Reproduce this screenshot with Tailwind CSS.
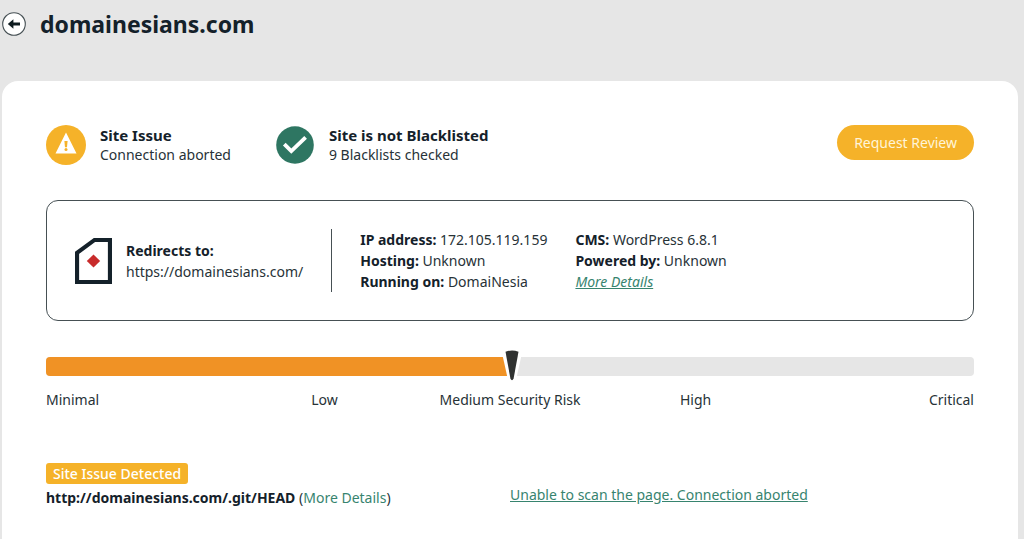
<!DOCTYPE html>
<html lang="en">
<head>
  <meta charset="UTF-8" />
  <meta name="viewport" content="width=device-width, initial-scale=1" />
  <title>domainesians.com - Site Check</title>
  <script src="https://cdn.jsdelivr.net/npm/@tailwindcss/browser@4"></script>
</head>
<body class="bg-[#e6e6e6] min-h-screen flex flex-col pl-0.5 pr-1.5 font-['Noto_Sans',sans-serif] text-sm text-[#273237]">
  <header class="flex items-center gap-3.5 h-12 mb-[33px]">
    <button type="button" aria-label="Back" class="size-6 cursor-pointer">
      <svg class="size-6" viewBox="0 0 24 24">
        <circle cx="12" cy="12" r="11.3" fill="#fff" stroke="#465054" stroke-width="1.1" />
        <path d="M5.8 12l5.6-4.8v3.2h6.6v3.2h-6.6v3.2z" fill="#0f1c20" />
      </svg>
    </button>
    <h1 class="text-[23px] font-bold text-[#14212a]">domainesians.com</h1>
  </header>

  <main class="grow bg-white rounded-t-2xl px-11 pt-11">
    <!-- Summary -->
    <div class="flex items-start">
      <section class="flex items-center gap-3.5">
        <svg class="size-10" viewBox="0 0 40 40">
          <circle cx="20" cy="20" r="20" fill="#f5b229" />
          <path d="M20 7.5L30.5 28.5h-21z" fill="#fff" />
          <path d="M18.4 16h3.2l-.6 6.2h-2z" fill="#f5b229" />
          <circle cx="20" cy="24.6" r="1.5" fill="#f5b229" />
        </svg>
        <div class="leading-[19px] pb-px">
          <h2 class="text-[15px] font-bold text-[#14212a]">Site Issue</h2>
          <p>Connection aborted</p>
        </div>
      </section>
      <section class="flex items-center gap-3.5 ml-11">
        <svg class="size-10" viewBox="0 0 40 40">
          <circle cx="20" cy="20" r="18.8" fill="#2e7662" />
          <path d="M9.3 19.2l7 7L30.6 12.4" fill="none" stroke="#fff" stroke-width="3.8" />
        </svg>
        <div class="leading-[19px] pb-px">
          <h2 class="text-[15px] font-bold text-[#14212a]">Site is not Blacklisted</h2>
          <p>9 Blacklists checked</p>
        </div>
      </section>
      <button type="button" class="ml-auto h-[35px] px-[17px] rounded-full bg-[#f5b229] text-[#fff5d8] cursor-pointer">Request Review</button>
    </div>

    <!-- Site details -->
    <section class="flex items-center mt-[35px] h-[121px] px-7 border border-[#465054] rounded-xl leading-[21px]">
      <svg class="w-[37px] h-[46px] mr-3.5" viewBox="0 0 36 46" preserveAspectRatio="none">
        <path d="M2 44V14.8L19 2h15v42z" fill="#fff" stroke="#14212a" stroke-width="4" />
        <path d="M18 16.5l6.5 6.5-6.5 6.5-6.5-6.5z" fill="#c82b2b" />
      </svg>
      <div class="pr-7">
        <p class="font-bold text-[#14212a]">Redirects to:</p>
        <p>https://domainesians.com/</p>
      </div>
      <div class="border-l border-[#465054] pl-7">
        <p><b class="text-[#14212a]">IP address:</b> 172.105.119.159</p>
        <p><b class="text-[#14212a]">Hosting:</b> Unknown</p>
        <p><b class="text-[#14212a]">Running on:</b> DomaiNesia</p>
      </div>
      <div class="pl-7">
        <p><b class="text-[#14212a]">CMS:</b> WordPress 6.8.1</p>
        <p><b class="text-[#14212a]">Powered by:</b> Unknown</p>
        <p><a href="#" class="italic underline text-[#37846f]">More Details</a></p>
      </div>
    </section>

    <!-- Risk level -->
    <section class="mt-9">
      <div class="relative h-[19px] rounded bg-[#e6e6e6]">
        <div class="h-[19px] w-1/2 rounded-l bg-[#f09225]"></div>
        <svg class="absolute left-1/2 -top-2 w-5 h-9 -translate-x-2" viewBox="0 0 20 36">
          <path d="M0 4L6 31h8l6-27z" fill="#fff" />
          <path d="M3.5 2.8Q10 .2 16.5 2.8L11.6 29.5Q10 33 8.4 29.5z" fill="#303231" />
        </svg>
      </div>
      <div class="grid grid-cols-5 mt-3.5 leading-5 text-center">
        <span class="text-left">Minimal</span>
        <span>Low</span>
        <span>Medium Security Risk</span>
        <span>High</span>
        <span class="text-right">Critical</span>
      </div>
    </section>

    <!-- Issues -->
    <section class="grid grid-cols-2 mt-[53px]">
      <div>
        <span class="inline-block rounded-[3px] bg-[#f5b229] px-[7px] leading-[21px] font-medium text-white">Site Issue Detected</span>
        <p class="mt-1 leading-5"><b class="text-[#14212a]">http://domainesians.com/.git/HEAD</b> (<a href="#" class="text-[#37846f]">More Details</a>)</p>
      </div>
      <p class="pt-[22px] leading-5"><a href="#" class="underline text-[#37846f]">Unable to scan the page. Connection aborted</a></p>
    </section>
  </main>
</body>
</html>
